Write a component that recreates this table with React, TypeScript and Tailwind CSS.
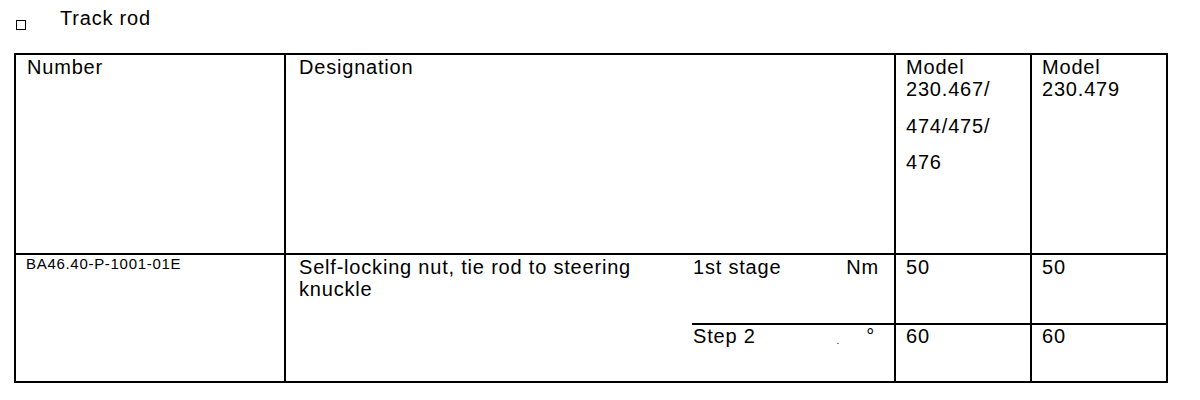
const body = 'text-[20px] leading-[22px] tracking-[0.8px]'

export default function App() {
  return (
    <div className="min-h-[400px] w-[1200px] bg-white text-black font-['Liberation_Sans',Arial,sans-serif]">
      {/* section title */}
      <div className="flex items-start pt-[7px]">
        <span className="ml-[16px] mt-[13px] h-[10px] w-[10px] border border-black" />
        <span className={`ml-[34px] ${body}`}>Track rod</span>
      </div>

      <div className="ml-[14px] mt-[23px] w-[1154px] border-2 border-black">
        {/* header row */}
        <div className="flex h-[200px] border-b-2 border-black">
          <div className={`w-[270px] border-r-2 border-black pl-[11px] pt-[1px] ${body}`}>Number</div>
          <div className={`w-[610px] border-r-2 border-black pl-[13px] pt-[1px] ${body}`}>Designation</div>
          <div className={`w-[136px] border-r-2 border-black pl-[10px] pt-[1px] ${body}`}>
            <div>Model</div>
            <div>230.467/</div>
            <div className="mt-[15px]">474/475/</div>
            <div className="mt-[14px]">476</div>
          </div>
          <div className={`flex-1 pl-[10px] pt-[1px] ${body}`}>
            <div>Model</div>
            <div>230.479</div>
          </div>
        </div>

        {/* torque row */}
        <div className="flex h-[126px]">
          <div className="w-[270px] border-r-2 border-black pl-[10px] pt-[1px] text-[15px] leading-[16px] tracking-[0.7px]">
            BA46.40-P-1001-01E
          </div>
          <div className={`w-[406px] pl-[13px] pt-[1px] pr-[6px] ${body}`}>
            Self-locking nut, tie rod to steering knuckle
          </div>
          <div className="flex flex-1 flex-col">
            <div className="flex h-[70px] border-b-2 border-black">
              <div className={`flex w-[204px] justify-between border-r-2 border-black pl-[1px] pr-[15px] pt-[1px] ${body}`}>
                <span>1st stage</span>
                <span>Nm</span>
              </div>
              <div className={`w-[136px] border-r-2 border-black pl-[10px] pt-[1px] ${body}`}>50</div>
              <div className={`flex-1 pl-[10px] pt-[1px] ${body}`}>50</div>
            </div>
            <div className="flex flex-1">
              <div className={`flex w-[204px] border-r-2 border-black pl-[1px] pr-[19px] ${body}`}>
                <span>Step 2</span>
                <span className="ml-auto mt-[8px] text-[10px] leading-[16px]">.</span>
                <span className="ml-[26px]">°</span>
              </div>
              <div className={`w-[136px] border-r-2 border-black pl-[10px] ${body}`}>60</div>
              <div className={`flex-1 pl-[10px] ${body}`}>60</div>
            </div>
          </div>
        </div>
      </div>
    </div>
  )
}
